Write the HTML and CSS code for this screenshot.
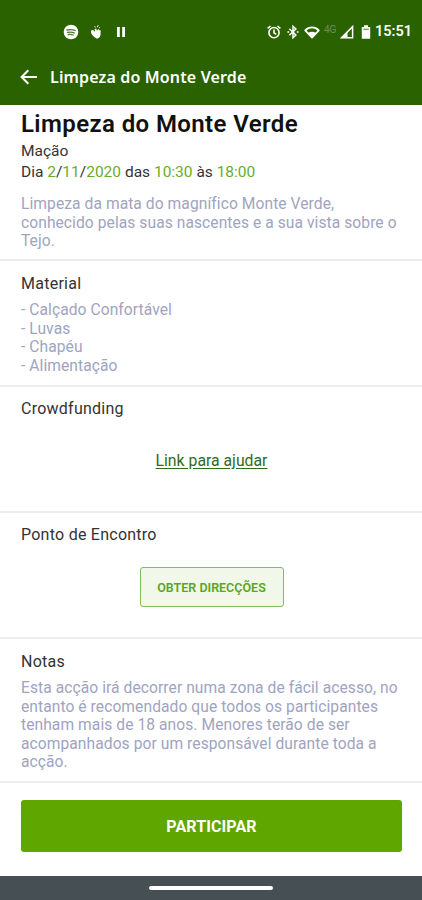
FILE: index.html
```html
<!DOCTYPE html>
<html lang="pt">
<head>
<meta charset="UTF-8">
<meta name="viewport" content="width=device-width, initial-scale=1.0">
<title>Limpeza do Monte Verde</title>
<link rel="stylesheet" href="styles.css">
</head>
<body>
    <header class="header">
        <div class="status-bar">
            <div class="status-left">
                <svg width="16" height="16" viewBox="0 0 16 16">
                    <circle cx="8" cy="8" r="7.3" fill="#fff"/>
                    <path d="M3.900 6c3-.7 5.800-.5 8.300.5M4.500 8.300c2.500-.5 4.700-.3 6.800.6M5.200 10.500c1.800-.3 3.500-.2 5 .5" fill="none" stroke="#4d7b2c" stroke-width="1.300" stroke-linecap="round"/>
                </svg>
                <svg class="icon-hand" width="12" height="16" viewBox="0 0 12 16">
                    <path d="M1 6.500 3 6l2 1.800L4.600 5l1.600-.5.700 2.300L8.500 5l1.200 1.600 1-.3-.2 4.700c-.4 2.200-1.800 3.500-3.500 3.700C4.200 13.500 1.500 11 1 8.500z" fill="#fff"/>
                    <path d="M5.300 3.400 4.700 2.200M7.300 3.200l.9-2M9.200 4l.9-.8" stroke="#fff" stroke-width="1"/>
                </svg>
                <svg class="icon-pause" width="10" height="12" viewBox="0 0 10 12">
                    <path d="M1 1h2.800v10H1zM6.200 1H9v10H6.200z" fill="#fff"/>
                </svg>
            </div>
            <div class="status-right">
                <svg width="14" height="14" viewBox="0 0 14 14" fill="none" stroke="#fff" stroke-width="1.600">
                    <circle cx="7" cy="7.600" r="5.100"/>
                    <path d="M7 4.600v3.300l2.200 1.300M.6 3.400 3.500 1M13.400 3.400 10.500 1"/>
                </svg>
                <svg width="12" height="14" viewBox="0 0 12 14" fill="none" stroke="#fff" stroke-width="1.500">
                    <path d="M2.300 3.700 8.900 10 6 12.700V1.300L8.900 4 2.300 10.300"/>
                    <path d="M.4 7h1.800M9.800 7h1.800"/>
                </svg>
                <svg class="icon-wifi" width="16" height="13" viewBox="0 0 16 13">
                    <path d="M1.200 4.300C5 .4 11 .4 14.800 4.300L8 11.700z" fill="none" stroke="#fff" stroke-width="1.700" stroke-linejoin="round"/>
                    <path d="M3.800 6.900c2.500-1.700 5.900-1.700 8.400 0L8 11.700z" fill="#fff"/>
                </svg>
                <span class="network">4G</span>
                <svg class="icon-signal" width="14" height="14" viewBox="0 0 14 14">
                    <path d="M1.500 12.700 12.600 1.600v11.100z" fill="none" stroke="#fff" stroke-width="1.500"/>
                    <path d="M1.500 12.700 7.500 6.700v6z" fill="#fff"/>
                </svg>
                <svg class="icon-battery" width="10" height="14" viewBox="0 0 10 14">
                    <path d="M3 .3h4v1.600h2.200v11.900H.8V1.900H3z" fill="#fff"/>
                    <path d="M2.300 3.600h5.400v1.500H2.300z" fill="#7da05f"/>
                </svg>
                <span class="clock">15:51</span>
            </div>
        </div>
        <div class="app-bar">
            <svg width="18" height="16" viewBox="0 0 18 16" fill="none" stroke="#fff" stroke-width="2">
                <path d="M17 8H2M8.300 1.300 1.600 8l6.700 6.700"/>
            </svg>
            <span class="app-title">Limpeza do Monte Verde</span>
        </div>
    </header>

    <main>
        <section class="section intro">
            <h1 class="title">Limpeza do Monte Verde</h1>
            <p class="place">Mação</p>
            <p class="date">Dia <b>2</b>/<b>11</b>/<b>2020</b> das <b>10:30</b> às <b>18:00</b></p>
            <p class="text">Limpeza da mata do magnífico Monte Verde,<br>conhecido pelas suas nascentes e a sua vista sobre o<br>Tejo.</p>
        </section>

        <section class="section material">
            <h2 class="subtitle">Material</h2>
            <p class="text">- Calçado Confortável<br>- Luvas<br>- Chapéu<br>- Alimentação</p>
        </section>

        <section class="section crowdfunding">
            <h2 class="subtitle">Crowdfunding</h2>
            <a class="help-link" href="#">Link para ajudar</a>
        </section>

        <section class="section meeting">
            <h2 class="subtitle">Ponto de Encontro</h2>
            <button class="button button-outline">OBTER DIRECÇÕES</button>
        </section>

        <section class="section notes">
            <h2 class="subtitle">Notas</h2>
            <p class="text">Esta acção irá decorrer numa zona de fácil acesso, no<br>entanto é recomendado que todos os participantes<br>tenham mais de 18 anos. Menores terão de ser<br>acompanhados por um responsável durante toda a<br>acção.</p>
        </section>
    </main>

    <div class="actions">
        <button class="button button-primary">PARTICIPAR</button>
    </div>

    <div class="nav-bar">
        <div class="nav-handle"></div>
    </div>
</body>
</html>
```
FILE: styles.css
```css
:root {
    --header-color: #2b6200;
    --primary-color: #5fa600;
    --text-color: #333;
    --muted-color: #a0a4c0;
    --line-color: #ececec;
}

* {
    box-sizing: border-box;
}

body {
    margin: 0;
    height: 900px;
    display: flex;
    flex-direction: column;
    overflow: hidden;
    font-family: Roboto, sans-serif;
    color: var(--text-color);
    background-color: #fff;
}

h1, h2, p {
    margin: 0;
}

svg {
    display: block;
    flex: none;
}

.header {
    height: 105px;
    flex: none;
    background-color: var(--header-color);
    color: #fff;
}

.status-bar {
    display: flex;
    justify-content: space-between;
    align-items: center;
    height: 48px;
    padding: 16px 10px 0 63px;
}

.status-left,
.status-right {
    display: flex;
    align-items: center;
}

.icon-hand {
    margin-left: 11px;
}

.icon-pause {
    margin-left: 14px;
}

.status-right svg + svg {
    margin-left: 6px;
}

.status-right .icon-wifi {
    margin-left: 5px;
}

.network {
    width: 14px;
    margin-left: 4px;
    margin-top: -5px;
    font-size: 10px;
    line-height: 12px;
    color: #6d9150;
}

.icon-signal {
    margin-left: 2px;
}

.status-right .icon-battery {
    margin-left: 7px;
}

.clock {
    width: 37px;
    margin-left: 4px;
    font-size: 14.5px;
    font-weight: 600;
    line-height: 18px;
    white-space: nowrap;
}

.app-bar {
    display: flex;
    align-items: center;
    height: 57px;
    padding-left: 20px;
    gap: 12px;
}

.app-title {
    font-family: "Noto Sans", sans-serif;
    font-size: 16px;
    font-weight: 600;
    line-height: 22px;
    letter-spacing: 0.15px;
}

.section {
    padding: 0 21px;
    border-bottom: 2px solid var(--line-color);
}

.intro {
    height: 156px;
    padding-top: 4px;
}

.material,
.crowdfunding,
.meeting {
    height: 126px;
    padding-top: 12px;
}

.notes {
    height: 144px;
    padding-top: 12px;
}

.title {
    font-size: 24px;
    font-weight: 600;
    line-height: 30px;
    letter-spacing: 0.4px;
    color: #111;
}

.place,
.date,
.subtitle {
    font-size: 16px;
    font-weight: 400;
    line-height: 21px;
}

.place,
.date {
    font-size: 15.5px;
}

.place {
    margin-top: 2px;
}

.subtitle {
    letter-spacing: 0.25px;
}

.date b {
    font-weight: 400;
    color: #67ad2b;
}

.text {
    margin-top: 7px;
    font-size: 15.6px;
    line-height: 18.5px;
    letter-spacing: 0.07px;
    color: var(--muted-color);
    white-space: nowrap;
}

.intro .text {
    margin-top: 12px;
}

.crowdfunding,
.meeting {
    display: flex;
    flex-direction: column;
    padding-top: 11px;
}

.help-link {
    align-self: center;
    margin-top: 31px;
    padding-left: 1px;
    font-size: 15.8px;
    line-height: 21px;
    color: #326b1b;
    text-underline-offset: 2px;
}

.button {
    padding: 0;
    border: none;
    border-radius: 3px;
    font-family: inherit;
    font-weight: 700;
}

.button-outline {
    align-self: center;
    width: 144px;
    height: 40px;
    margin-top: 22px;
    margin-left: 1px;
    border: 1px solid #83bd55;
    font-size: 12.5px;
    font-weight: 600;
    color: #5ca51c;
    background-color: #f1f8ea;
}

.actions {
    flex: 1;
    padding: 17px 20px 0 21px;
}

.button-primary {
    width: 100%;
    height: 52px;
    font-size: 16px;
    letter-spacing: 0.1px;
    color: #fff;
    background-color: var(--primary-color);
}

.nav-bar {
    display: flex;
    justify-content: center;
    align-items: center;
    height: 24px;
    background-color: #464f53;
}

.nav-handle {
    width: 124px;
    height: 4px;
    border-radius: 2px;
    background-color: #fff;
}
```
